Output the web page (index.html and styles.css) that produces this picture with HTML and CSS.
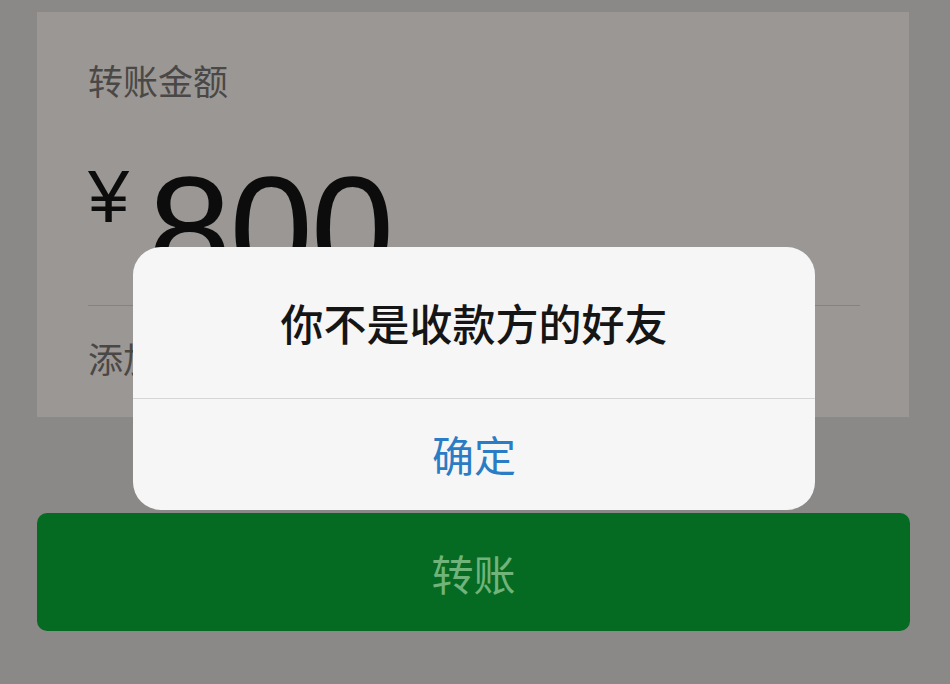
FILE: index.html
```html
<!DOCTYPE html>
<html lang="zh-CN">
<head>
<meta charset="utf-8">
<link rel="stylesheet" href="styles.css">
</head>
<body>
<div class="page">
  <div class="card">
    <div class="label">转账金额</div>
    <div class="amount"><span class="yen">¥</span><span class="num">800</span></div>
    <div class="divider"></div>
    <div class="note">添加转账说明</div>
  </div>
  <div class="btn">转账</div>
  <div class="dialog">
    <div class="dialog-title">你不是收款方的好友</div>
    <div class="dialog-action">确定</div>
  </div>
</div>
</body>
</html>
```

FILE: styles.css
```css
html, body {
  margin: 0;
  padding: 0;
  background: #8b8987;
}
.page {
  position: relative;
  width: 950px;
  height: 684px;
  overflow: hidden;
  padding-top: 12px;
  box-sizing: border-box;
  font-family: "Noto Sans CJK SC", "Liberation Sans", sans-serif;
}
.card {
  margin-left: 37px;
  width: 872px;
  height: 405px;
  box-sizing: border-box;
  background: #9a9794;
  padding: 48px 49px 0 51px;
  display: flex;
  flex-direction: column;
}
.label {
  font-size: 35px;
  line-height: 40px;
  color: #4a4846;
}
.amount {
  margin-top: 69px;
  display: flex;
  align-items: flex-start;
  height: 136px;
  color: #0c0c0c;
  font-family: "Liberation Sans", sans-serif;
}
.yen {
  font-size: 74px;
  line-height: 74px;
  margin-top: -9px;
  width: 60px;
  flex: none;
}
.num {
  font-size: 150px;
  line-height: 150px;
  margin-top: -14px;
  letter-spacing: -2px;
  flex: none;
}
.divider {
  height: 1px;
  background: #86837f;
}
.note {
  margin-top: 32px;
  font-size: 35px;
  line-height: 40px;
  color: #4a4846;
}
.btn {
  margin: 96px 0 0 37px;
  width: 873px;
  height: 118px;
  border-radius: 10px;
  background: #066b22;
  color: #70b47c;
  font-size: 42px;
  display: flex;
  align-items: center;
  justify-content: center;
}
.dialog {
  position: absolute;
  left: 133px;
  top: 247px;
  width: 682px;
  height: 263px;
  border-radius: 28px;
  background: #f6f6f6;
  display: flex;
  flex-direction: column;
  overflow: hidden;
}
.dialog-title {
  height: 152px;
  border-bottom: 1px solid #d6d6d6;
  display: flex;
  align-items: center;
  justify-content: center;
  font-size: 43px;
  font-weight: 500;
  color: #151515;
  padding-bottom: 2px;
  box-sizing: border-box;
}
.dialog-action {
  flex: 1;
  display: flex;
  align-items: center;
  justify-content: center;
  font-size: 42px;
  color: #2a7dc4;
  padding-bottom: 2px;
}
```
